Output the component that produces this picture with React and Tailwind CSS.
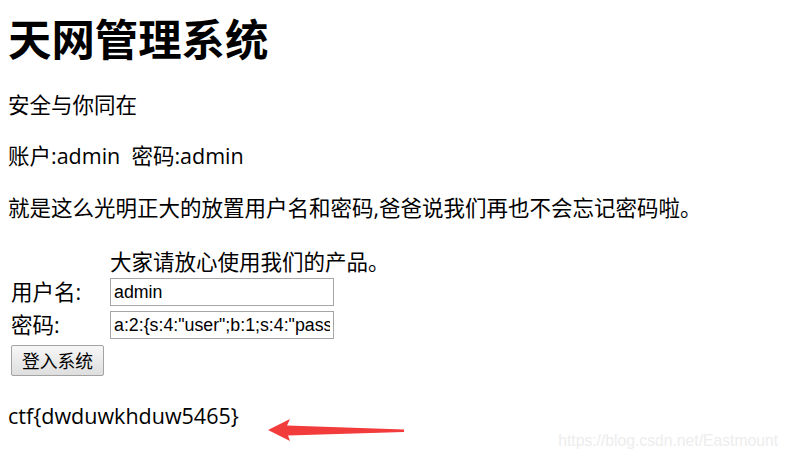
import React from "react";

export default function App() {
  const base = { fontFamily: '"Open Sans","Noto Sans CJK SC",sans-serif' };
  return (
    <div className="relative w-[788px] h-[462px] bg-white text-black overflow-hidden" style={base}>
      <div className="flex flex-col pl-[8px]">
        <h1 className="text-[43.4px] font-bold leading-[50px] mt-[12px]" style={{ fontFamily: '"Noto Sans CJK SC",sans-serif' }}>
          天网管理系统
        </h1>
        <p className="text-[21.5px] leading-[30px] mt-[28px]">安全与你同在</p>
        <p className="text-[21.5px] leading-[30px] mt-[21px] whitespace-pre">账户:admin  密码:admin</p>
        <p className="text-[21.5px] leading-[30px] mt-[22px]">就是这么光明正大的放置用户名和密码,爸爸说我们再也不会忘记密码啦。</p>

        <div className="grid grid-cols-[99px_auto] justify-start mt-[25px] pl-[3px] text-[21.5px]">
          <div />
          <div className="leading-[28px]">大家请放心使用我们的产品。</div>
          <div className="mt-[2px] leading-[28px]">用户名:</div>
          <div className="mt-[2px]">
            <input
              readOnly
              value="admin"
              className="block w-[224px] h-[28px] border border-[#a6a6a6] px-[3px] text-[17.78px] text-black outline-none"
              style={{ fontFamily: '"Liberation Sans",Arial,sans-serif' }}
            />
          </div>
          <div className="mt-[5px] leading-[28px]">密码:</div>
          <div className="mt-[5px]">
            <input
              readOnly
              value={'a:2:{s:4:"user";b:1;s:4:"pass";b:1;}'}
              className="block w-[224px] h-[28px] border border-[#a6a6a6] px-[3px] text-[17.78px] text-black outline-none"
              style={{ fontFamily: '"Liberation Sans",Arial,sans-serif' }}
            />
          </div>
          <div className="col-span-2 mt-[5px]">
            <button
              className="w-[93px] h-[31px] border border-[#a3a3a3] rounded-[2px] bg-gradient-to-b from-[#f7f7f7] to-[#dedede] text-[17.78px] leading-none text-black"
              style={{ fontFamily: '"Noto Sans CJK SC",sans-serif' }}
            >
              登入系统
            </button>
          </div>
        </div>

        <p className="text-[21.5px] leading-[30px] mt-[25px]">ctf{"{"}dwduwkhduw5465{"}"}</p>
      </div>

      <svg className="absolute left-0 top-0" width="788" height="462" viewBox="0 0 788 462">
        <polygon
          points="268,430 290,419 287,425.5 404,429.5 404,432 288,435.5 290,441"
          fill="#f23b3b"
        />
      </svg>

      <div
        className="absolute right-[10px] top-[431px] text-[15.7px] leading-[20px] text-[#ededed]"
        style={{ fontFamily: '"Liberation Sans",Arial,sans-serif' }}
      >
        https://blog.csdn.net/Eastmount
      </div>
    </div>
  );
}
